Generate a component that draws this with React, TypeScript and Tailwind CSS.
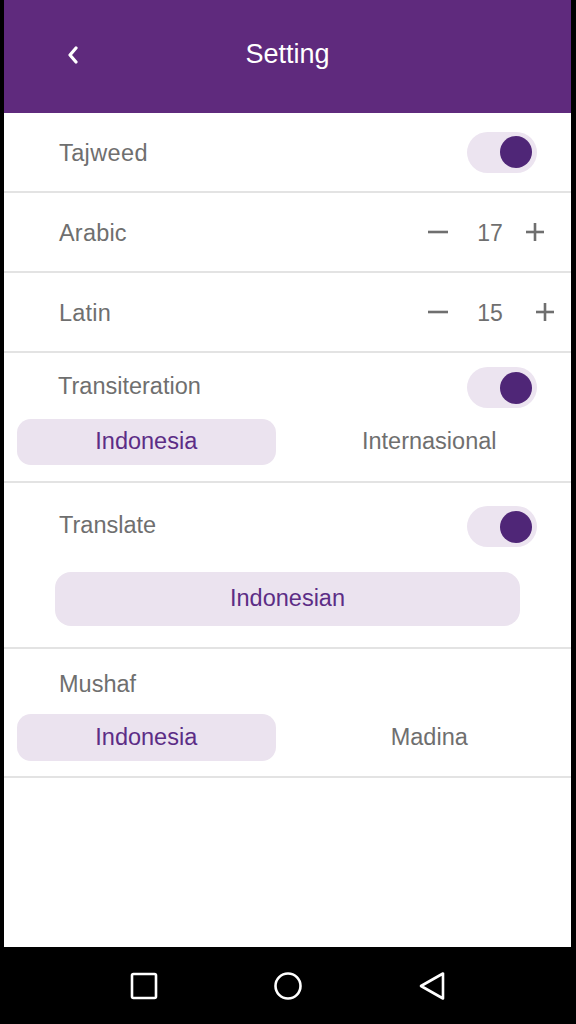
import React from "react";

const font = { fontFamily: '"Liberation Sans", Arial, sans-serif' };

function Toggle() {
  return (
    <div className="w-[70px] h-[41px] rounded-full bg-[#ece4f0] flex items-center justify-end pr-[5px]">
      <div className="w-[32px] h-[32px] rounded-full bg-[#4f2677]" />
    </div>
  );
}

function Divider() {
  return <div className="h-[2px] bg-[#e3e3e3]" />;
}

function Minus() {
  return (
    <svg width="20" height="20" viewBox="0 0 20 20" className="block">
      <line x1="0" y1="10" x2="20" y2="10" stroke="#6f6f6f" strokeWidth="2.6" />
    </svg>
  );
}

function Plus() {
  return (
    <svg width="18" height="18" viewBox="0 0 18 18" className="block">
      <line x1="0" y1="9" x2="18" y2="9" stroke="#6f6f6f" strokeWidth="2.6" />
      <line x1="9" y1="0" x2="9" y2="18" stroke="#6f6f6f" strokeWidth="2.6" />
    </svg>
  );
}

export default function App() {
  return (
    <div className="w-[576px] h-[1024px] bg-black flex flex-col" style={font}>
      <div className="flex-1 flex">
        <div className="ml-[4px] mr-[5px] flex-1 bg-white flex flex-col">
          {/* Header */}
          <div className="h-[113px] bg-[#5f2a7d] relative flex items-center justify-center">
            <svg
              width="12"
              height="18"
              viewBox="0 0 12 18"
              className="absolute left-[63px] top-[46px]"
            >
              <polyline
                points="9,2 3,9 9,16"
                fill="none"
                stroke="#ffffff"
                strokeWidth="3.2"
                strokeLinecap="round"
                strokeLinejoin="round"
              />
            </svg>
            <span className="text-white text-[27px] leading-none -mt-[4px]">Setting</span>
          </div>

          {/* Tajweed */}
          <div className="h-[78px] flex items-center pl-[55px] pr-[34px]">
            <span className="flex-1 mt-[3px] text-[23.5px] tracking-[0.4px] text-[#6f6f6f]">Tajweed</span>
            <Toggle />
          </div>
          <Divider />

          {/* Arabic */}
          <div className="h-[78px] flex items-center pl-[55px] pr-[27px]">
            <span className="flex-1 mt-[3px] text-[23.5px] tracking-[0.2px] text-[#6f6f6f]">Arabic</span>
            <Minus />
            <span className="w-[44px] mt-[2px] ml-[20px] mr-[14px] text-center text-[23px] text-[#6f6f6f]">17</span>
            <Plus />
          </div>
          <Divider />

          {/* Latin */}
          <div className="h-[78px] flex items-center pl-[55px] pr-[17px]">
            <span className="flex-1 mt-[3px] text-[23.5px] tracking-[0.2px] text-[#6f6f6f]">Latin</span>
            <Minus />
            <span className="w-[44px] mt-[2px] ml-[20px] mr-[24px] text-center text-[23px] text-[#6f6f6f]">15</span>
            <Plus />
          </div>
          <Divider />

          {/* Transiteration */}
          <div className="pt-[14px] pb-[16px]">
            <div className="flex items-center pl-[54px] pr-[34px]">
              <span className="flex-1 -mt-[1px] text-[23.5px] text-[#6f6f6f]">Transiteration</span>
              <Toggle />
            </div>
            <div className="grid grid-cols-2 mt-[11px]">
              <div className="pl-[13px] pr-[12px]">
                <div className="h-[46px] rounded-[14px] bg-[#ebe3ef] flex items-center justify-center text-[23.5px] text-[#5c2d86]">
                  Indonesia
                </div>
              </div>
              <div className="h-[46px] flex items-center justify-center text-[23.5px] text-[#6f6f6f]">
                Internasional
              </div>
            </div>
          </div>
          <Divider />

          {/* Translate */}
          <div className="pt-[23px] pb-[21px]">
            <div className="flex items-center pl-[55px] pr-[34px]">
              <span className="flex-1 -mt-[1px] text-[23.5px] text-[#6f6f6f]">Translate</span>
              <Toggle />
            </div>
            <div className="mx-[51px] mt-[25px] h-[54px] rounded-[16px] bg-[#ebe3ef] flex items-center justify-center text-[23.5px] text-[#5c2d86]">
              Indonesian
            </div>
          </div>
          <Divider />

          {/* Mushaf */}
          <div className="pt-[15px] pb-[15px]">
            <div className="h-[41px] flex items-center pl-[55px]">
              <span className="text-[23.5px] text-[#6f6f6f]">Mushaf</span>
            </div>
            <div className="grid grid-cols-2 mt-[9px]">
              <div className="pl-[13px] pr-[12px]">
                <div className="h-[47px] rounded-[14px] bg-[#ebe3ef] flex items-center justify-center text-[23.5px] text-[#5c2d86]">
                  Indonesia
                </div>
              </div>
              <div className="h-[47px] flex items-center justify-center text-[23.5px] text-[#6f6f6f]">
                Madina
              </div>
            </div>
          </div>
          <Divider />

          <div className="flex-1" />
        </div>
      </div>

      {/* Nav bar */}
      <div className="h-[77px] bg-black flex items-center justify-center gap-[114px]">
        <svg width="30" height="30" viewBox="0 0 30 30" className="block">
          <rect x="3" y="3" width="24" height="24" rx="1.5" fill="none" stroke="#ffffff" strokeWidth="2.6" />
        </svg>
        <svg width="30" height="30" viewBox="0 0 30 30" className="block">
          <circle cx="15" cy="15" r="12.5" fill="none" stroke="#ffffff" strokeWidth="2.6" />
        </svg>
        <svg width="30" height="30" viewBox="0 0 30 30" className="block">
          <polygon
            points="4,15 26,2.5 26,27.5"
            fill="none"
            stroke="#ffffff"
            strokeWidth="2.6"
            strokeLinejoin="round"
          />
        </svg>
      </div>
    </div>
  );
}
